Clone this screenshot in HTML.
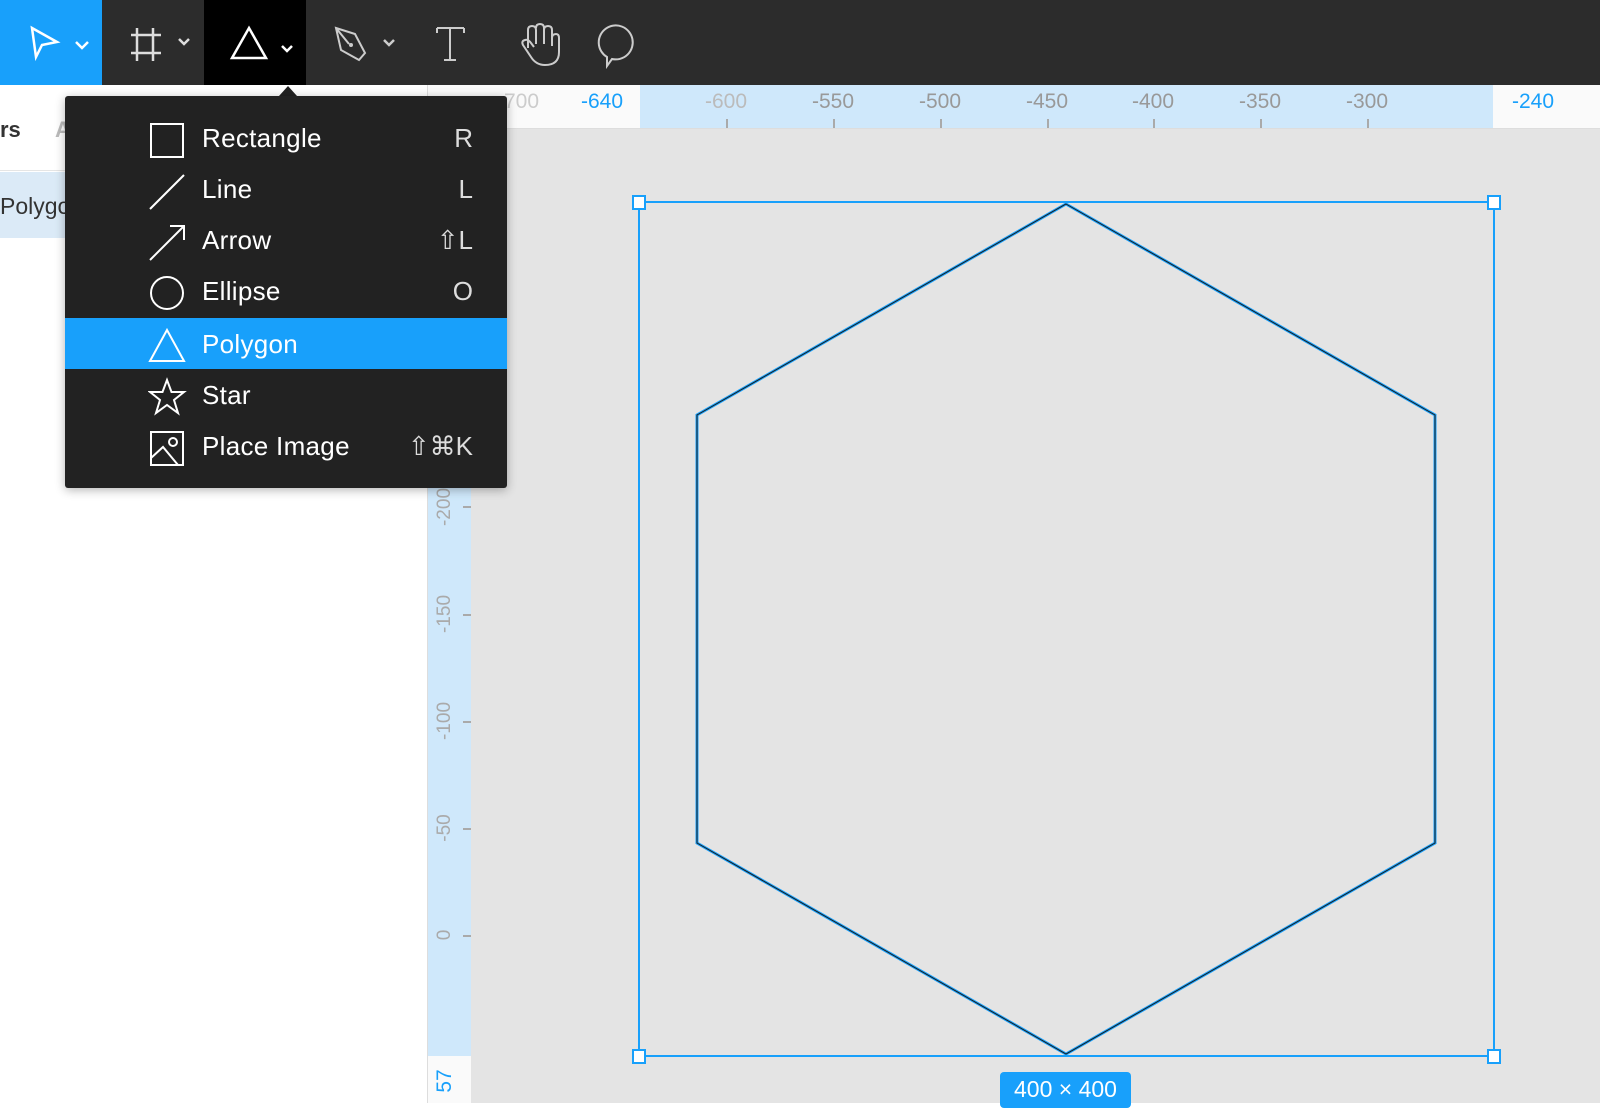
<!DOCTYPE html>
<html><head><meta charset="utf-8"><style>
*{margin:0;padding:0;box-sizing:border-box}
body{width:1600px;height:1103px;overflow:hidden;position:relative;background:#fff;font-family:"Liberation Sans",sans-serif}
.abs{position:absolute}
.tb{left:0;top:0;width:1600px;height:85px;background:#2c2c2c}
.menu{left:65px;top:96px;width:442px;height:392px;background:#222;border-radius:3px;box-shadow:0 2px 10px rgba(0,0,0,.3)}
.item{position:absolute;left:0;width:442px;height:51px;color:#fff;font-size:26px}
.item .lbl{position:absolute;left:137px;top:11px;letter-spacing:0.3px}
.item .sc{position:absolute;right:34px;top:11px;color:#ddd}
.item svg{position:absolute;left:83px;top:8px}
.rl{color:#999;font-size:21px;position:absolute;top:90px;transform:translateX(-50%)}
.tick{position:absolute;top:119px;width:2px;height:9px;background:#aaa}
.vl{color:#aaa;font-size:19px;position:absolute;left:445px;transform:translate(-50%,-50%) rotate(-90deg)}
.vt{position:absolute;left:463px;width:8px;height:2px;background:#aaa}
</style></head><body>
<div class="abs tb"></div>
<div class="abs" style="left:0;top:0;width:102px;height:85px;background:#18a0fb"></div>
<div class="abs" style="left:204px;top:0;width:102px;height:85px;background:#000"></div>
<svg class="abs" style="left:0;top:0" width="700" height="100" fill="none" stroke="#fff" stroke-width="2.5">
<path d="M32 28 L57 42 L42 45 L36 57 Z"/><path d="M76 42 l6 6 l6-6"/>
<path d="M137 28 v33 M153 28 v33 M131 35 h30 M131 53 h30" stroke="#ddd"/><path d="M179 39 l5 5 l5-5" stroke="#ddd"/>
<path d="M249 28 L266 58 H232 Z"/><path d="M282 46 l5 5 l5-5"/>
<path d="M336 28 L355 34 L365 53 L359 60 L350 55 L341 50 Z M336 28 L349 44" stroke="#ccc" stroke-width="2"/><circle cx="351" cy="45" r="2" fill="#ccc" stroke="none"/><path d="M384 40 l5 5 l5-5" stroke="#ccc"/>
<path d="M437 28 H464 M450 28 V60 M444 60 H456 M437 28 v5 M464 28 v5" stroke="#ccc" stroke-width="2"/>
<path d="M528 48 V30 q0-4 4-4 q4 0 4 4 V44 M536 28 q0-4 4-4 q4 0 4 4 V44 M544 30 q0-4 4-4 q4 0 4 4 V46 M552 38 q0-4 4-4 q3 0 3 4 V52 q0 13-14 13 q-9 0-14-8 l-8-12 q-2-4 2-5 q3-1 6 3 l3 4" stroke="#ccc" stroke-width="2"/>
<path d="M612 59 L607 66 L607 57 A17 17 0 1 1 612 59 Z" stroke="#ccc" stroke-width="2"/>
</svg>
<div class="abs" style="left:279px;top:86px;width:0;height:0;border-left:9px solid transparent;border-right:9px solid transparent;border-bottom:10px solid #222"></div>
<div class="abs" style="left:427px;top:85px;width:1px;height:1018px;background:#ddd"></div>
<div class="abs" style="left:0;top:117px;font-size:22px;font-weight:bold;color:#333">rs</div>
<div class="abs" style="left:55px;top:117px;font-size:22px;font-weight:bold;color:#bbb">A</div>
<div class="abs" style="left:0;top:170px;width:427px;height:1px;background:#e5e5e5"></div>
<div class="abs" style="left:0;top:172px;width:427px;height:66px;background:#dbeaf7"></div>
<div class="abs" style="left:0;top:193px;font-size:23px;color:#333">Polygon</div>
<div class="abs" style="left:428px;top:85px;width:1172px;height:43px;background:#fafafa"></div>
<div class="abs" style="left:640px;top:85px;width:853px;height:43px;background:#cfe8fb"></div>
<div class="abs" style="left:428px;top:128px;width:1172px;height:1px;background:#ddd"></div>
<div class="rl" style="left:518px;color:#ccc">-700</div>
<div class="rl" style="left:602px;color:#18a0fb">-640</div>
<div class="rl" style="left:726px;color:#bbb">-600</div><div class="tick" style="left:726px"></div>
<div class="rl" style="left:833px">-550</div><div class="tick" style="left:833px"></div>
<div class="rl" style="left:940px">-500</div><div class="tick" style="left:940px"></div>
<div class="rl" style="left:1047px">-450</div><div class="tick" style="left:1047px"></div>
<div class="rl" style="left:1153px">-400</div><div class="tick" style="left:1153px"></div>
<div class="rl" style="left:1260px">-350</div><div class="tick" style="left:1260px"></div>
<div class="rl" style="left:1367px">-300</div><div class="tick" style="left:1367px"></div>
<div class="rl" style="left:1533px;color:#18a0fb">-240</div>
<div class="abs" style="left:428px;top:129px;width:43px;height:974px;background:#fafafa"></div>
<div class="abs" style="left:428px;top:129px;width:43px;height:927px;background:#cfe8fb"></div>
<div class="vl" style="top:507px">-200</div><div class="vt" style="top:506px"></div>
<div class="vl" style="top:614px">-150</div><div class="vt" style="top:614px"></div>
<div class="vl" style="top:721px">-100</div><div class="vt" style="top:721px"></div>
<div class="vl" style="top:828px">-50</div><div class="vt" style="top:828px"></div>
<div class="vl" style="top:935px">0</div><div class="vt" style="top:935px"></div>
<div class="vl" style="top:1081px;color:#18a0fb;font-size:21px">57</div>
<div class="abs" style="left:471px;top:129px;width:1129px;height:974px;background:#e4e4e4"></div>
<svg class="abs" style="left:0;top:0" width="1600" height="1103">
<polygon points="1066,204 1435,415 1435,843 1066,1054 697,843 697,415" fill="none" stroke="#18a0fb" stroke-width="3"/>
<polygon points="1066,204 1435,415 1435,843 1066,1054 697,843 697,415" fill="none" stroke="#1a1a1a" stroke-width="1"/>
<rect x="639" y="202" width="855" height="854" fill="none" stroke="#18a0fb" stroke-width="2"/>
<g fill="#fff" stroke="#18a0fb" stroke-width="2">
<rect x="633" y="196" width="12" height="13"/><rect x="1488" y="196" width="12" height="13"/>
<rect x="633" y="1050" width="12" height="13"/><rect x="1488" y="1050" width="12" height="13"/></g>
</svg>
<div class="abs" style="left:1000px;top:1072px;width:131px;height:36px;background:#18a0fb;border-radius:4px;color:#fff;font-size:23px;text-align:center;line-height:34px">400 × 400</div>
<div class="abs menu">
<div class="item" style="top:16px"><svg width="40" height="40" fill="none" stroke="#fff" stroke-width="2"><rect x="3" y="4" width="32" height="33"/></svg><span class="lbl">Rectangle</span><span class="sc">R</span></div>
<div class="item" style="top:67px"><svg width="40" height="40" fill="none" stroke="#fff" stroke-width="2"><path d="M2 38 L36 4"/></svg><span class="lbl">Line</span><span class="sc">L</span></div>
<div class="item" style="top:118px"><svg width="40" height="40" fill="none" stroke="#fff" stroke-width="2"><path d="M2 38 L36 4 M22 4 H36 V18"/></svg><span class="lbl">Arrow</span><span class="sc">⇧L</span></div>
<div class="item" style="top:169px"><svg width="40" height="40" fill="none" stroke="#fff" stroke-width="2"><circle cx="19" cy="20" r="16"/></svg><span class="lbl">Ellipse</span><span class="sc">O</span></div>
<div class="item" style="top:222px;background:#18a0fb"><svg width="40" height="40" fill="none" stroke="#fff" stroke-width="2"><path d="M19 4 L36 35 H2 Z"/></svg><span class="lbl">Polygon</span></div>
<div class="item" style="top:273px"><svg width="40" height="40" fill="none" stroke="#fff" stroke-width="2"><path d="M19 3 L23.5 15 L36 15 L26 23 L30 36 L19 28 L8 36 L12 23 L2 15 L14.5 15 Z"/></svg><span class="lbl">Star</span></div>
<div class="item" style="top:324px"><svg width="40" height="40" fill="none" stroke="#fff" stroke-width="2"><rect x="3" y="4" width="32" height="33"/><path d="M3 30 L15 19 L30 37"/><circle cx="25" cy="14" r="4"/></svg><span class="lbl">Place Image</span><span class="sc">⇧⌘K</span></div>
</div>
</body></html>
